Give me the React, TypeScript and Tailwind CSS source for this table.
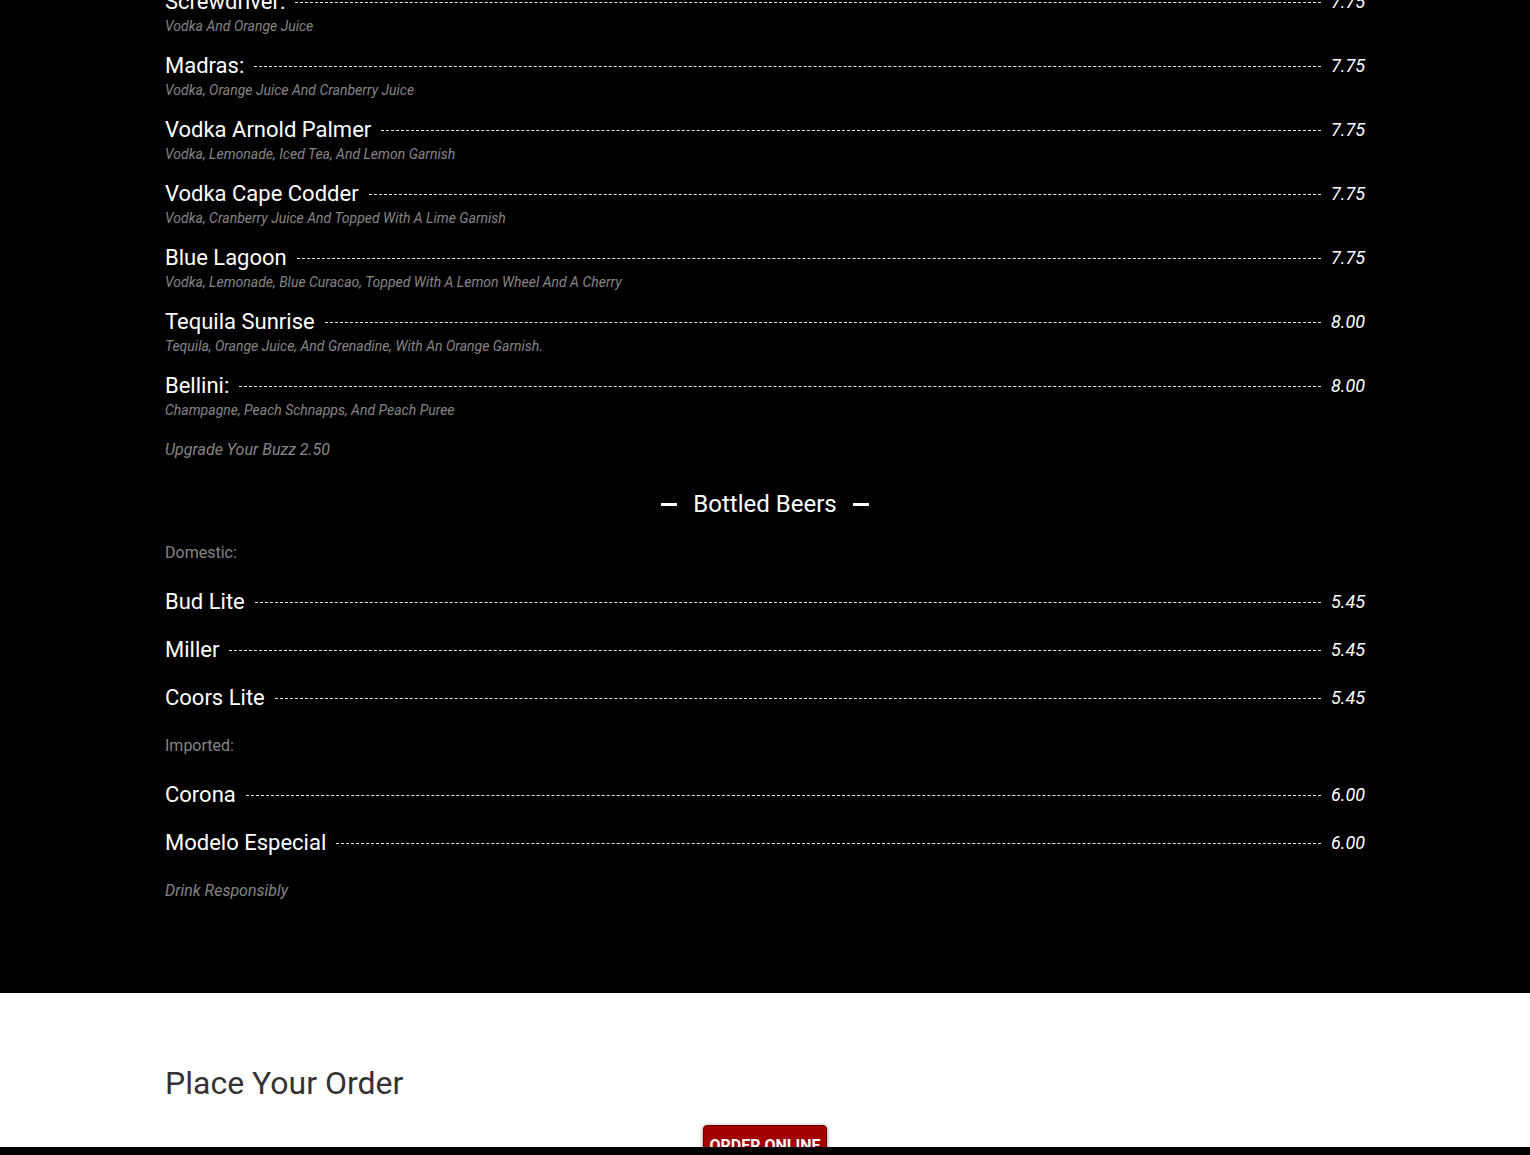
import React from "react";

interface MenuItem {
  name: string;
  price: string;
  desc?: string;
}

const cocktails: MenuItem[] = [
  { name: "Screwdriver:", price: "7.75", desc: "Vodka And Orange Juice" },
  { name: "Madras:", price: "7.75", desc: "Vodka, Orange Juice And Cranberry Juice" },
  { name: "Vodka Arnold Palmer", price: "7.75", desc: "Vodka, Lemonade, Iced Tea, And Lemon Garnish" },
  { name: "Vodka Cape Codder", price: "7.75", desc: "Vodka, Cranberry Juice And Topped With A Lime Garnish" },
  { name: "Blue Lagoon", price: "7.75", desc: "Vodka, Lemonade, Blue Curacao, Topped With A Lemon Wheel And A Cherry" },
  { name: "Tequila Sunrise", price: "8.00", desc: "Tequila, Orange Juice, And Grenadine, With An Orange Garnish." },
  { name: "Bellini:", price: "8.00", desc: "Champagne, Peach Schnapps, And Peach Puree" },
];

const domestic: MenuItem[] = [
  { name: "Bud Lite", price: "5.45" },
  { name: "Miller", price: "5.45" },
  { name: "Coors Lite", price: "5.45" },
];

const imported: MenuItem[] = [
  { name: "Corona", price: "6.00" },
  { name: "Modelo Especial", price: "6.00" },
];

function Item({ item }: { item: MenuItem }) {
  return (
    <div className={item.desc ? "mb-[15px]" : "mb-[18px]"}>
      <div className="flex items-center h-[30px]">
        <span className="text-[22px] leading-[30px] text-white whitespace-nowrap">{item.name}</span>
        <span className="flex-1 mx-[10px] border-t border-dashed border-white/90 mt-[1px]"></span>
        <span className="text-[18px] leading-[30px] italic text-white">{item.price}</span>
      </div>
      {item.desc && (
        <div className="mt-[-1px] text-[14px] leading-[20px] italic text-[#858585]">{item.desc}</div>
      )}
    </div>
  );
}

export default function App() {
  return (
    <div className="min-h-[1155px] bg-white" style={{ fontFamily: "Roboto, 'Open Sans', sans-serif" }}>
      <section className="bg-black pb-[92px] overflow-hidden">
        <div className="w-[1200px] mx-auto mt-[-13px] flex flex-col">
          {cocktails.map((c) => (
            <Item key={c.name} item={c} />
          ))}
          <div className="mt-[5px] text-[16px] leading-[20px] italic text-[#858585]">
            Upgrade Your Buzz 2.50
          </div>

          <div className="mt-[28px] flex items-center justify-center gap-[16px] h-[32px]">
            <span className="w-[16px] h-[3px] bg-white"></span>
            <h2 className="text-[24px] leading-[32px] text-white">Bottled Beers</h2>
            <span className="w-[16px] h-[3px] bg-white"></span>
          </div>

          <div className="mt-[23px] mb-[24px] text-[16px] leading-[20px] text-[#858585]">Domestic:</div>
          {domestic.map((c) => (
            <Item key={c.name} item={c} />
          ))}
          <div className="mt-[5px] mb-[24px] text-[16px] leading-[20px] text-[#858585]">Imported:</div>
          {imported.map((c) => (
            <Item key={c.name} item={c} />
          ))}
          <div className="mt-[5px] text-[16px] leading-[20px] italic text-[#858585]">
            Drink Responsibly
          </div>
        </div>
      </section>

      <section className="bg-white pt-[70px] pb-[40px]">
        <div className="w-[1200px] mx-auto">
          <h2 className="text-[32px] leading-[40px] text-[#333]">Place Your Order</h2>
          <div className="mt-[22px] flex justify-center">
            <button className="bg-[#a30000] text-white font-bold text-[16px] leading-[20px] uppercase pt-[10px] pb-[10px] w-[124px] rounded-[4px] border border-[#6d0000] shadow-[0_1px_4px_rgba(0,0,0,0.5)]">
              Order Online
            </button>
          </div>
        </div>
      </section>

      <div className="fixed bottom-0 left-0 right-0 h-[8px] bg-black"></div>
    </div>
  );
}
